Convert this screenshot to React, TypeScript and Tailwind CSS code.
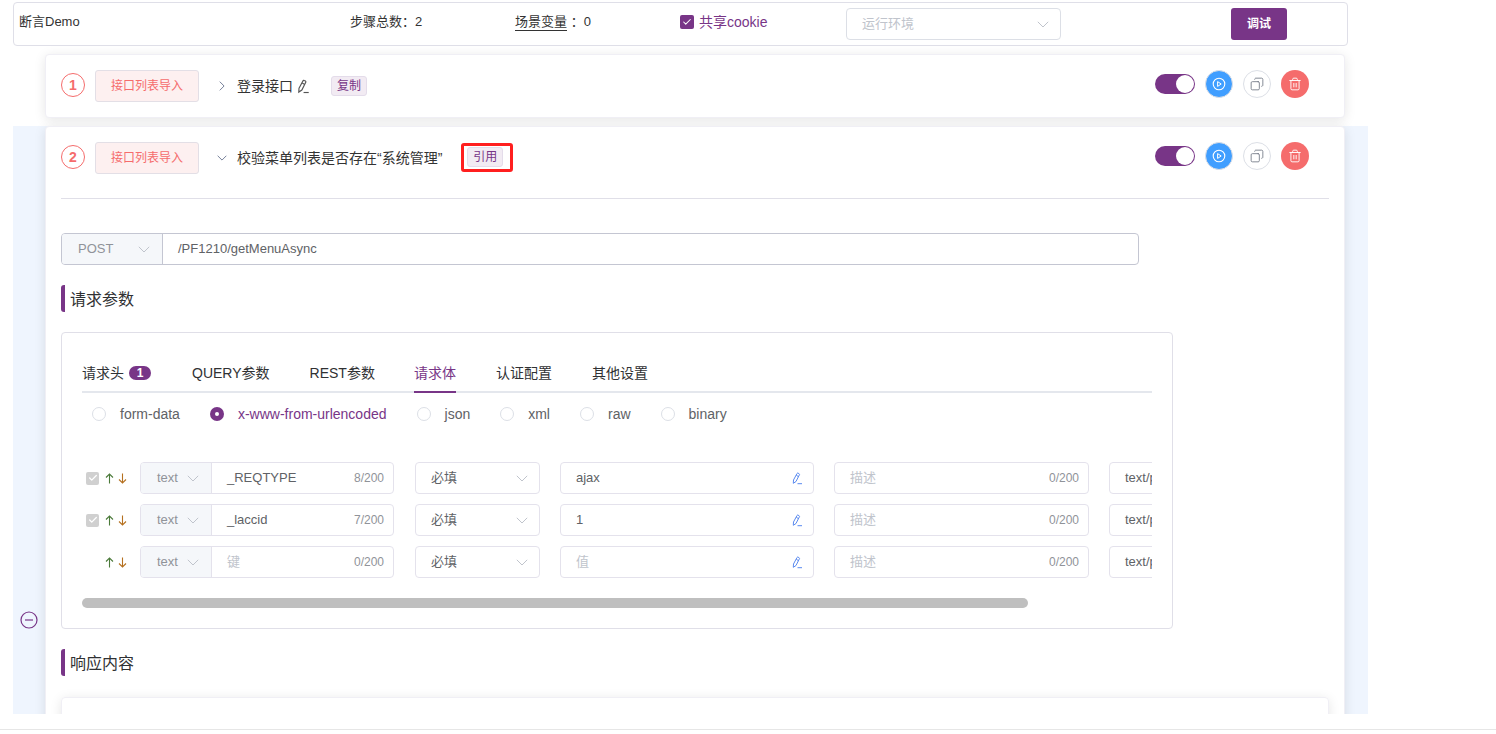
import React from 'react';
import { Check, Copy, Trash2 } from 'lucide-react';

const Pencil: React.FC<{ className?: string }> = ({ className }) => (
    <svg viewBox="0 0 14 14" fill="none" stroke="currentColor" strokeWidth="1" className={className}>
        <path d="M3.5 9 7 2.5a.8.8 0 0 1 1.1-.3l1 .5a.8.8 0 0 1 .3 1.1L6 10.5 3.3 12.3Z" />
        <path d="M6.3 4.4 8.5 5.6" />
        <path d="M7.5 12.7h4.5" />
    </svg>
);

const CaretDown: React.FC<{ className?: string }> = ({ className }) => (
    <svg viewBox="0 0 12 7" fill="none" stroke="currentColor" strokeWidth="1" className={className}>
        <path d="M.8.8 6 6 11.2.8" />
    </svg>
);

const CaretRight: React.FC<{ className?: string }> = ({ className }) => (
    <svg viewBox="0 0 7 12" fill="none" stroke="currentColor" strokeWidth="1" className={className}>
        <path d="M.8.8 6 6 .8 11.2" />
    </svg>
);

const Arrow: React.FC<{ className?: string }> = ({ className }) => (
    <svg viewBox="0 0 9 11" fill="none" stroke="currentColor" strokeWidth="1.1" className={className}>
        <path d="M4.5 10.5V1M1 4.5 4.5 1 8 4.5" />
    </svg>
);

const PlayCircle: React.FC = () => (
    <svg viewBox="0 0 14 14" fill="none" stroke="currentColor" className="w-[14px] h-[14px] text-white">
        <circle cx="7" cy="7" r="5.8" strokeWidth="1.1" />
        <path d="M5.6 4.6 9.2 7l-3.6 2.4Z" strokeWidth="1" strokeLinejoin="round" />
    </svg>
);

const Actions: React.FC = () => (
    <div className="flex items-center ml-auto mr-[20px]">
        <div className="w-10 h-5 rounded-full bg-[#783587] relative mr-[10px]">
            <span className="absolute right-[1px] top-[1px] w-[18px] h-[18px] rounded-full bg-white" />
        </div>
        <div className="w-7 h-7 rounded-full bg-[#409eff] border border-[#dcdfe6] flex items-center justify-center mr-[10px]">
            <PlayCircle />
        </div>
        <div className="w-7 h-7 rounded-full bg-white border border-[#dcdfe6] flex items-center justify-center mr-[10px]">
            <Copy className="w-[14px] h-[14px] text-[#6b7280] -scale-x-100" strokeWidth={1.4} />
        </div>
        <div className="w-7 h-7 rounded-full bg-[#f56c6c] flex items-center justify-center">
            <Trash2 className="w-[14px] h-[14px] text-white" strokeWidth={1.6} />
        </div>
    </div>
);

const StepHead: React.FC<{ index: number; open?: boolean; children: React.ReactNode }> = ({ index, open, children }) => (
    <div className="flex items-start">
        <div className="w-6 h-6 mt-[3px] rounded-full border border-[#f56c6c] text-[#f56c6c] text-sm font-bold flex items-center justify-center">{index}</div>
        <div className="ml-[10px] w-[104px] h-8 rounded-[3px] border border-[#e3dfe6] bg-[#fdf0f0] text-[#f56c6c] text-xs flex items-center justify-center">接口列表导入</div>
        <div className="ml-[16px] h-8 flex items-center text-[#333333] text-sm">
            <span className="w-[22px] flex items-center pl-[2px]">
                {open ? <CaretDown className="w-[10px] h-[6px] text-[#5b6785]" /> : <CaretRight className="w-[6px] h-[10px] ml-[2px] text-[#5b6785]" />}
            </span>
            {children}
        </div>
        <Actions />
    </div>
);

const SectionTitle: React.FC<{ title: string }> = ({ title }) => (
    <div className="flex items-center h-[27px]">
        <span className="w-1 h-[27px] rounded-l-[3px] bg-[#783587]" />
        <span className="ml-[5px] pt-[3px] text-base text-[#303133]">{title}</span>
    </div>
);

const Radio: React.FC<{ label: string; active?: boolean }> = ({ label, active }) => (
    <div className={`flex items-center mr-[30px] text-sm ${active ? 'text-[#783587]' : 'text-[#606266]'}`}>
        {active ? (
            <span className="w-[14px] h-[14px] rounded-full bg-[#783587] flex items-center justify-center">
                <span className="w-1 h-1 rounded-full bg-white" />
            </span>
        ) : (
            <span className="w-[14px] h-[14px] rounded-full border border-[#dcdfe6] bg-white" />
        )}
        <span className="ml-[14px]">{label}</span>
    </div>
);

type RowData = { checked: boolean; key: string; count: string; value: string };

const ROWS: RowData[] = [
    { checked: true, key: '_REQTYPE', count: '8/200', value: 'ajax' },
    { checked: true, key: '_laccid', count: '7/200', value: '1' },
    { checked: false, key: '', count: '0/200', value: '' },
];

const ParamRow: React.FC<{ row: RowData }> = ({ row }) => (
    <div className="flex items-center h-8 w-max text-[13px] text-[#606266] whitespace-nowrap">
        <div className="w-[4px] shrink-0" />
        <div className="w-[13px] h-[13px] mr-[6px] shrink-0">
            {row.checked && (
                <span className="w-[13px] h-[13px] rounded-[2px] bg-[#d0d0d0] flex items-center justify-center">
                    <Check className="w-[10px] h-[10px] text-white" strokeWidth={3} />
                </span>
            )}
        </div>
        <Arrow className="w-[9px] h-[11px] shrink-0 mr-[4px] text-[#4b7a3a]" />
        <Arrow className="w-[9px] h-[11px] shrink-0 mr-[13px] rotate-180 text-[#b5701f]" />
        <div className="flex shrink-0 w-[254px] h-8 rounded-[4px] border border-[#e4e2ec] overflow-hidden">
            <div className="w-[71px] bg-[#f5f7fa] border-r border-[#e4e2ec] flex items-center pl-[16px] text-[#909399]">
                <span>text</span>
                <CaretDown className="w-[12px] h-[7px] ml-[9px] text-[#c0c4cc]" />
            </div>
            <div className="flex-1 flex items-center pl-[15px] pr-[9px]">
                {row.key ? <span>{row.key}</span> : <span className="text-[#c0c4cc]">键</span>}
                <span className="ml-auto text-xs text-[#909399]">{row.count}</span>
            </div>
        </div>
        <div className="ml-[21px] shrink-0 w-[125px] h-8 rounded-[4px] border border-[#e4e2ec] flex items-center pl-[15px] pr-[11px]">
            <span>必填</span>
            <CaretDown className="w-[12px] h-[7px] ml-auto text-[#c0c4cc]" />
        </div>
        <div className="ml-[20px] shrink-0 w-[254px] h-8 rounded-[4px] border border-[#e4e2ec] flex items-center pl-[15px] pr-[9px]">
            {row.value ? <span>{row.value}</span> : <span className="text-[#c0c4cc]">值</span>}
            <Pencil className="w-[14px] h-[14px] ml-auto text-[#5b8bf0]" />
        </div>
        <div className="ml-[20px] shrink-0 w-[255px] h-8 rounded-[4px] border border-[#e4e2ec] flex items-center pl-[15px] pr-[9px]">
            <span className="text-[#c0c4cc]">描述</span>
            <span className="ml-auto text-xs text-[#909399]">0/200</span>
        </div>
        <div className="ml-[20px] shrink-0 w-[120px] h-8 rounded-[4px] border border-[#e4e2ec] flex items-center pl-[15px]">
            <span>text/plain</span>
        </div>
    </div>
);

const App: React.FC = () => {
    return (
        <div className="h-[734px] overflow-hidden bg-white font-['Liberation_Sans','Noto_Sans_CJK_SC',sans-serif]">
            <div className="h-[714px] overflow-hidden pt-[2px]">
                {/* Top bar */}
                <div className="ml-[13px] w-[1335px] h-[44px] rounded-[4px] border border-[#dfdfe8] flex items-center text-[13px] text-[#333333] whitespace-nowrap">
                    <span className="ml-[5px] w-[331px] -mt-[4px]">断言Demo</span>
                    <span className="w-[165px] -mt-[4px]">步骤总数：2</span>
                    <span className="w-[165px] -mt-[4px]">
                        <span className="border-b border-[#333333] pb-[1px]">场景变量</span>
                        <span> ：0</span>
                    </span>
                    <div className="w-[166px] flex items-center text-sm text-[#783587] -mt-[4px]">
                        <span className="w-[14px] h-[14px] mr-[5px] rounded-[2px] bg-[#783587] flex items-center justify-center">
                            <Check className="w-[10px] h-[10px] text-white" strokeWidth={2.5} />
                        </span>
                        共享cookie
                    </div>
                    <div className="w-[215px] h-8 rounded-[4px] border border-[#dcdfe6] flex items-center pl-[15px] pr-[11px] text-[#c0c4cc]">
                        运行环境
                        <CaretDown className="w-[12px] h-[7px] ml-auto" />
                    </div>
                    <div className="ml-[170px] w-14 h-8 rounded-[3px] bg-[#783587] text-white text-xs font-bold flex items-center justify-center">调试</div>
                </div>

                {/* Step 1 */}
                <div className="mt-[8px] ml-[45px] w-[1300px] h-[64px] rounded-[4px] border border-[#f0eff5] bg-white shadow-[0_2px_12px_0_rgba(0,0,0,0.1)] pt-[15px] px-[15px]">
                    <StepHead index={1}>
                        <span className="-mt-[1px]">登录接口</span>
                        <Pencil className="w-4 h-4 ml-[2px] text-[#555555]" />
                        <span className="ml-[20px] h-5 px-[5px] rounded-[3px] border border-[#e4dcea] bg-[#f2ebf3] text-[#783587] text-xs flex items-center">复制</span>
                    </StepHead>
                </div>

                {/* Step 2 */}
                <div className="mt-[8px] ml-[13px] w-[1355px] h-[600px] bg-[#eff5fe] flex">
                    <div className="w-8 pt-[485px] pl-[7px]">
                        <svg viewBox="0 0 18 18" fill="none" stroke="#783587" strokeWidth="1.2" className="w-[18px] h-[18px]">
                            <circle cx="9" cy="9" r="8" />
                            <path d="M5 9h8" />
                        </svg>
                    </div>
                    <div className="w-[1300px] h-[600px] rounded-[4px] border border-[#f0eff5] bg-white shadow-[0_2px_12px_0_rgba(0,0,0,0.1)] pt-[15px] px-[15px]">
                        <StepHead index={2} open>
                            <span className="-mt-[1px]">校验菜单列表是否存在“系统管理”</span>
                            <span className="ml-[19px] w-[52px] h-[29px] -mt-[2px] pl-[3px] border-[3px] border-[#ff1f1f] rounded-[3px] flex items-center">
                                <span className="h-5 px-[5px] rounded-[3px] border border-[#e4dcea] bg-[#f2ebf3] text-[#783587] text-xs flex items-center">引用</span>
                            </span>
                        </StepHead>

                        <div className="mt-[24px] h-px bg-[#e0dfe8]" />

                        {/* Request line */}
                        <div className="mt-[34px] flex w-[1078px] h-8 rounded-[4px] border border-[#c4c6d2] overflow-hidden text-[13px]">
                            <div className="w-[101px] bg-[#f5f7fa] border-r border-[#c4c6d2] flex items-center pl-[16px] text-[#909399]">
                                POST
                                <CaretDown className="w-[12px] h-[7px] ml-[25px] text-[#c0c4cc]" />
                            </div>
                            <div className="flex-1 flex items-center pl-[15px] pb-[1px] text-[#606266]">/PF1210/getMenuAsync</div>
                        </div>

                        <div className="mt-[20px]">
                            <SectionTitle title="请求参数" />
                        </div>

                        {/* Params panel */}
                        <div className="mt-[20px] w-[1112px] h-[297px] rounded-[4px] border border-[#e0dfe8] pl-[20px] pt-[20px]">
                            <div className="w-[1070px] h-10 border-b-2 border-[#e4e7ed] flex text-sm text-[#303133] whitespace-nowrap">
                                <div className="h-10 flex items-center">
                                    请求头
                                    <span className="ml-[5px] w-[22px] h-[14px] rounded-full bg-[#783587] text-white text-xs font-bold flex items-center justify-center">1</span>
                                </div>
                                <div className="h-10 flex items-center ml-[41px]">QUERY参数</div>
                                <div className="h-10 flex items-center ml-[40px]">REST参数</div>
                                <div className="h-10 flex items-center ml-[39px] pt-[2px] text-[#783587] border-b-2 border-[#783587]">请求体</div>
                                <div className="h-10 flex items-center ml-[40px]">认证配置</div>
                                <div className="h-10 flex items-center ml-[40px]">其他设置</div>
                            </div>

                            <div className="mt-[11px] pl-[10px] h-[20px] flex items-center">
                                <Radio label="form-data" />
                                <Radio label="x-www-from-urlencoded" active />
                                <Radio label="json" />
                                <Radio label="xml" />
                                <Radio label="raw" />
                                <Radio label="binary" />
                            </div>

                            <div className="mt-[38px] w-[1070px] overflow-hidden flex flex-col gap-[10px]">
                                {ROWS.map(row => <ParamRow key={row.count + row.key} row={row} />)}
                            </div>

                            <div className="mt-[20px] w-[946px] h-[10px] rounded-full bg-[#bfbfbf]" />
                        </div>

                        <div className="mt-[20px]">
                            <SectionTitle title="响应内容" />
                        </div>

                        <div className="mt-[21px] h-[60px] rounded-[4px] border border-[#f0eff5] shadow-[0_2px_12px_0_rgba(0,0,0,0.1)]" />
                    </div>
                </div>
            </div>
            <div className="mt-[15px] border-t border-[#e6e6e6]" />
        </div>
    );
};

export default App;
